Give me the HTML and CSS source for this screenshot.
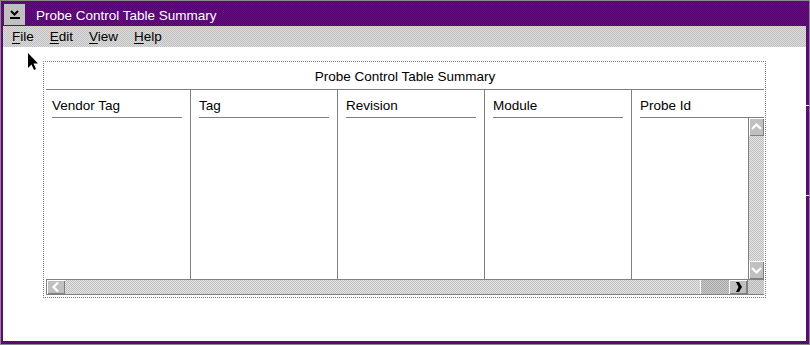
FILE: index.html
```html
<!DOCTYPE html>
<html lang="en">

<head>
  <meta charset="UTF-8">
  <meta name="viewport" content="width=device-width, initial-scale=1.0">
  <title>Probe Control Table Summary</title>
  <link rel="stylesheet" href="styles.css">
</head>

<body>
  <div class="window">
    <div class="titlebar">
      <div class="sysbtn">
        <svg width="21" height="21" viewBox="0 0 21 21">
          <polyline points="7,7 10.5,10.5 14,7" fill="none" stroke="#000" stroke-width="2" />
          <rect x="6" y="13" width="10" height="2" fill="#000" />
        </svg>
      </div>
      <span class="title">Probe Control Table Summary</span>
    </div>

    <div class="menubar">
      <span class="menu-item"><u>F</u>ile</span>
      <span class="menu-item"><u>E</u>dit</span>
      <span class="menu-item"><u>V</u>iew</span>
      <span class="menu-item"><u>H</u>elp</span>
    </div>

    <div class="client">
      <svg class="cursor" width="11" height="18" viewBox="0 0 11 18">
        <polygon points="0,0 0,15 3.5,11.5 6,17 8,16 5.5,10.5 10,10.5" fill="#000" />
      </svg>

      <div class="frame">
        <div class="frame-title">Probe Control Table Summary</div>

        <div class="columns">
          <div class="col col-first">
            <div class="col-head">Vendor Tag</div>
          </div>
          <div class="col">
            <div class="col-head">Tag</div>
          </div>
          <div class="col">
            <div class="col-head">Revision</div>
          </div>
          <div class="col">
            <div class="col-head">Module</div>
          </div>
          <div class="col col-last">
            <div class="col-head">Probe Id</div>
            <div class="col-body">
              <div class="vscroll">
                <div class="sb-btn sb-v">
                  <svg width="15" height="18" viewBox="0 0 15 18">
                    <polyline points="3,11 7.5,6.5 12,11" fill="none" stroke="#fff" stroke-width="2.2" />
                  </svg>
                </div>
                <div class="sb-track"></div>
                <div class="sb-btn sb-v">
                  <svg width="15" height="18" viewBox="0 0 15 18">
                    <polyline points="3,7 7.5,11.5 12,7" fill="none" stroke="#fff" stroke-width="2.2" />
                  </svg>
                </div>
              </div>
            </div>
          </div>
        </div>

        <div class="hscroll">
          <div class="sb-btn sb-h">
            <svg width="18" height="14" viewBox="0 0 18 14">
              <polyline points="11,2.5 6.5,7 11,11.5" fill="none" stroke="#fff" stroke-width="2.2" />
            </svg>
          </div>
          <div class="sb-track"></div>
          <div class="sb-thumb"></div>
          <div class="sb-btn sb-h sb-right">
            <svg width="18" height="14" viewBox="0 0 18 14">
              <polygon points="7,2 10,2 13,7 10,12 7,12 9.5,7" fill="#000" />
            </svg>
          </div>
          <div class="sb-corner"></div>
        </div>
      </div>
    </div>
  </div>
</body>

</html>
```

FILE: styles.css
```css
body {
  margin: 0;
  font-family: "Liberation Sans", Arial, sans-serif;
  font-size: 13.5px;
  background: #fff;
}

.window {
  width: 810px;
  height: 345px;
  box-sizing: border-box;
  border: 1px solid #8a8a8a;
  padding: 0 3px 3px 2px;
  display: flex;
  flex-direction: column;
  background:
    linear-gradient(#fff, #fff) right 0 top 104px / 3px 1px no-repeat,
    linear-gradient(#fff, #fff) right 0 top 194px / 3px 1px no-repeat,
    repeating-conic-gradient(#6a0a8c 0 25%, #4e0662 0 50%) 0 0 / 2px 2px;
}

.titlebar {
  height: 25px;
  display: flex;
  align-items: flex-start;
  flex-shrink: 0;
}

.sysbtn {
  width: 21px;
  height: 21px;
  margin: 3px 0 0 1px;
  background: #c0c0c0;
}

.sysbtn svg {
  display: block;
}

.title {
  color: #fff;
  line-height: 16px;
  margin: 7px 0 0 11px;
}

.menubar {
  height: 21px;
  box-sizing: border-box;
  padding: 3px 0 0 1px;
  display: flex;
  flex-shrink: 0;
  background: repeating-conic-gradient(#c0c0c0 0 25%, #dcdcdc 0 50%) 0 0 / 2px 2px;
}

.menu-item {
  padding: 0 8px;
  line-height: 16px;
  color: #000;
}

.menu-item u {
  text-underline-offset: 2px;
}

.client {
  flex: 1;
  position: relative;
  background: #fff;
  padding: 14px 0 0 40px;
}

.cursor {
  position: absolute;
  left: 25px;
  top: 6px;
}

.frame {
  width: 723px;
  height: 237px;
  box-sizing: border-box;
  border: 1px dotted #808080;
  padding: 0 1px 1px 2px;
  display: flex;
  flex-direction: column;
}

.frame-title {
  height: 28px;
  box-sizing: border-box;
  padding-top: 7px;
  line-height: 16px;
  text-align: center;
  border-bottom: 1px solid #808080;
  flex-shrink: 0;
}

.columns {
  height: 189px;
  display: flex;
  flex-shrink: 0;
}

.col {
  width: 147px;
  box-sizing: border-box;
  border-right: 1px solid #808080;
  display: flex;
  flex-direction: column;
}

.col-first {
  width: 145px;
}

.col-last {
  width: 132px;
  border-right: none;
}

.col-head {
  height: 28px;
  box-sizing: border-box;
  margin: 0 8px 0 8px;
  padding-top: 8px;
  line-height: 16px;
  border-bottom: 1px solid #808080;
}

.col-first .col-head {
  margin-left: 6px;
}

.col-last .col-head {
  margin-right: 0;
}

.col-body {
  flex: 1;
  display: flex;
  justify-content: flex-end;
}

.vscroll {
  width: 16px;
  box-sizing: border-box;
  border-left: 1px solid #808080;
  display: flex;
  flex-direction: column;
}

.sb-btn {
  background: #c0c0c0;
  box-shadow: inset 1px 1px #fff, inset -1px -1px #808080;
  flex-shrink: 0;
}

.sb-btn svg {
  display: block;
}

.sb-v {
  height: 18px;
}

.sb-track {
  flex: 1;
  background: repeating-conic-gradient(#c0c0c0 0 25%, #e4e4e4 0 50%) 0 0 / 2px 2px;
}

.hscroll {
  height: 16px;
  box-sizing: border-box;
  border-top: 1px solid #808080;
  border-bottom: 1px solid #808080;
  border-left: 1px solid #808080;
  display: flex;
  flex-shrink: 0;
}

.sb-h {
  width: 18px;
}

.sb-right {
  border-right: 1px solid #808080;
}

.sb-thumb {
  width: 28px;
  background: repeating-conic-gradient(#a8a8a8 0 25%, #c8c8c8 0 50%) 0 0 / 2px 2px;
  border-left: 1px solid #fff;
}

.sb-corner {
  width: 16px;
  background: repeating-conic-gradient(#b8b8b8 0 25%, #d8d8d8 0 50%) 0 0 / 2px 2px;
}
```
